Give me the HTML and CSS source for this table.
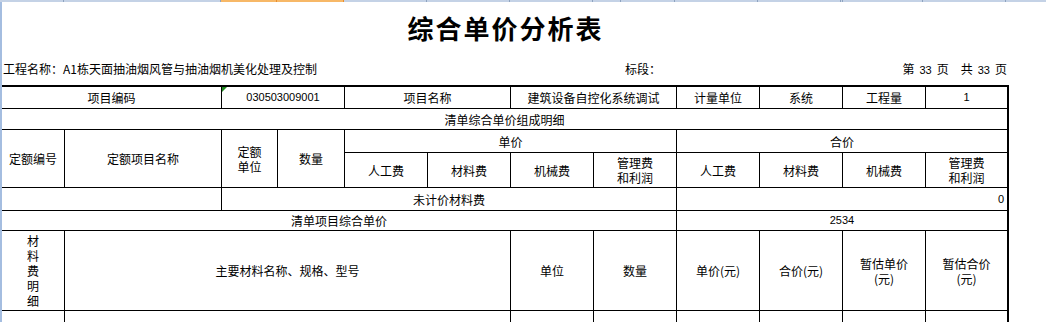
FILE: index.html
```html
<!DOCTYPE html>
<html lang="zh-CN">
<head>
<meta charset="utf-8">
<title>综合单价分析表</title>
<link rel="stylesheet" href="styles.css">
</head>
<body>
<div class="colbar">
  <span class="seg" style="width:64px"></span>
  <span class="seg" style="width:157px"></span>
  <span class="seg sel" style="width:56px"></span>
  <span class="seg sel" style="width:67px"></span>
  <span class="seg" style="width:83px"></span>
  <span class="seg" style="width:83px"></span>
  <span class="seg" style="width:83px"></span>
  <span class="seg" style="width:28px"></span>
  <span class="seg" style="width:54px"></span>
  <span class="seg" style="width:83px"></span>
  <span class="seg" style="width:83px"></span>
  <span class="seg" style="width:2px"></span>
  <span class="seg" style="width:80px"></span>
  <span class="seg" style="width:83px"></span>
  <span class="seg" style="width:41px"></span>
</div>
<div class="page">
  <h1 class="title">综合单价分析表</h1>
  <div class="info">
    <span class="proj">工程名称：A1栋天面抽油烟风管与抽油烟机美化处理及控制</span>
    <span class="sect">标段：</span>
    <span class="pageno">第<span class="num pn">33</span>页<span class="gap"></span>共<span class="num pn">33</span>页</span>
  </div>
  <div class="sheet">
    <!-- row 1 -->
    <div class="c" style="grid-column:1/3">项目编码</div>
    <div class="c code num" style="grid-column:3/5">030503009001</div>
    <div class="c" style="grid-column:5/7">项目名称</div>
    <div class="c" style="grid-column:7/9">建筑设备自控化系统调试</div>
    <div class="c">计量单位</div>
    <div class="c">系统</div>
    <div class="c">工程量</div>
    <div class="c num">1</div>
    <!-- row 2 -->
    <div class="c" style="grid-column:1/-1">清单综合单价组成明细</div>
    <!-- row 3/4 -->
    <div class="c" style="grid-column:1/2;grid-row:3/5">定额编号</div>
    <div class="c" style="grid-column:2/3;grid-row:3/5">定额项目名称</div>
    <div class="c" style="grid-column:3/4;grid-row:3/5">定额<br>单位</div>
    <div class="c" style="grid-column:4/5;grid-row:3/5">数量</div>
    <div class="c" style="grid-column:5/9;grid-row:3">单价</div>
    <div class="c" style="grid-column:9/13;grid-row:3">合价</div>
    <div class="c" style="grid-column:5;grid-row:4">人工费</div>
    <div class="c" style="grid-column:6;grid-row:4">材料费</div>
    <div class="c" style="grid-column:7;grid-row:4">机械费</div>
    <div class="c" style="grid-column:8;grid-row:4">管理费<br>和利润</div>
    <div class="c" style="grid-column:9;grid-row:4">人工费</div>
    <div class="c" style="grid-column:10;grid-row:4">材料费</div>
    <div class="c" style="grid-column:11;grid-row:4">机械费</div>
    <div class="c" style="grid-column:12;grid-row:4">管理费<br>和利润</div>
    <!-- row 5 -->
    <div class="c" style="grid-column:1/3"></div>
    <div class="c" style="grid-column:3/9">未计价材料费</div>
    <div class="c right num" style="grid-column:9/13">0</div>
    <!-- row 6 -->
    <div class="c" style="grid-column:1/9">清单项目综合单价</div>
    <div class="c num" style="grid-column:9/13">2534</div>
    <!-- row 7 -->
    <div class="c vert">材<br>料<br>费<br>明<br>细</div>
    <div class="c" style="grid-column:2/7">主要材料名称、规格、型号</div>
    <div class="c">单位</div>
    <div class="c">数量</div>
    <div class="c">单价(元)</div>
    <div class="c">合价(元)</div>
    <div class="c">暂估单价<br>(元)</div>
    <div class="c">暂估合价<br>(元)</div>
    <!-- row 8 -->
    <div class="c"></div>
    <div class="c" style="grid-column:2/7"></div>
    <div class="c"></div>
    <div class="c"></div>
    <div class="c"></div>
    <div class="c"></div>
    <div class="c"></div>
    <div class="c"></div>
  </div>
</div>
</body>
</html>
```

FILE: styles.css
```css
html, body {
  margin: 0;
  padding: 0;
  background: #ffffff;
  overflow: hidden;
}

body {
  width: 1046px;
  height: 322px;
  font-family: "Noto Sans CJK SC", "Liberation Sans", sans-serif;
  color: #000;
  font-size: 12px;
}

.colbar {
  display: flex;
  height: 1px;
  background: #c9d6e8;
  border-bottom: 1px solid #9eb2cc;
}

.colbar .seg {
  display: block;
  flex: none;
  height: 2px;
  box-sizing: border-box;
  border-right: 1px solid #8ea3bf;
  background: #c4d2e6;
}

.colbar .seg.sel {
  background: #f7b867;
  border-right-color: #e88d2e;
}

.page {
  border-left: 2px solid #a4bde0;
  height: 320px;
  overflow: hidden;
}

.title {
  margin: 0;
  padding-top: 13px;
  width: 1007px;
  height: 26px;
  line-height: 26px;
  font-size: 26px;
  font-weight: 700;
  text-align: center;
  letter-spacing: 2px;
}

.info {
  display: grid;
  grid-template-columns: 622px 1fr auto;
  margin-top: 21px;
  padding: 0 39px 0 1px;
  height: 14px;
  line-height: 14px;
  font-size: 12px;
}

.num {
  font-family: "Liberation Sans", sans-serif;
  font-size: 11px;
}

.pageno .pn {
  margin: 0 5px;
}

.pageno .gap {
  display: inline-block;
  width: 12px;
}

.sheet {
  margin-top: 9px;
  width: 1005px;
  display: grid;
  grid-template-columns: 62px 156px 55px 66px 82px 82px 82px 82px 82px 82px 82px 81px;
  grid-template-rows: 21px 20px 22px 34px 22px 19px 79px 11px;
  gap: 1px;
  background: #000;
  padding: 2px 2px 0 0;
}

.c {
  background: #fff;
  display: flex;
  align-items: center;
  justify-content: center;
  text-align: center;
  line-height: 15px;
  font-size: 12px;
  position: relative;
}

.c.num {
  font-size: 11px;
}

.c.right {
  justify-content: flex-end;
  padding-right: 3px;
}

.c.code::before {
  content: "";
  position: absolute;
  left: 0;
  top: 0;
  width: 0;
  height: 0;
  border-top: 5px solid #1f8a1f;
  border-right: 5px solid transparent;
}

.c.vert {
  line-height: 15px;
}
```
